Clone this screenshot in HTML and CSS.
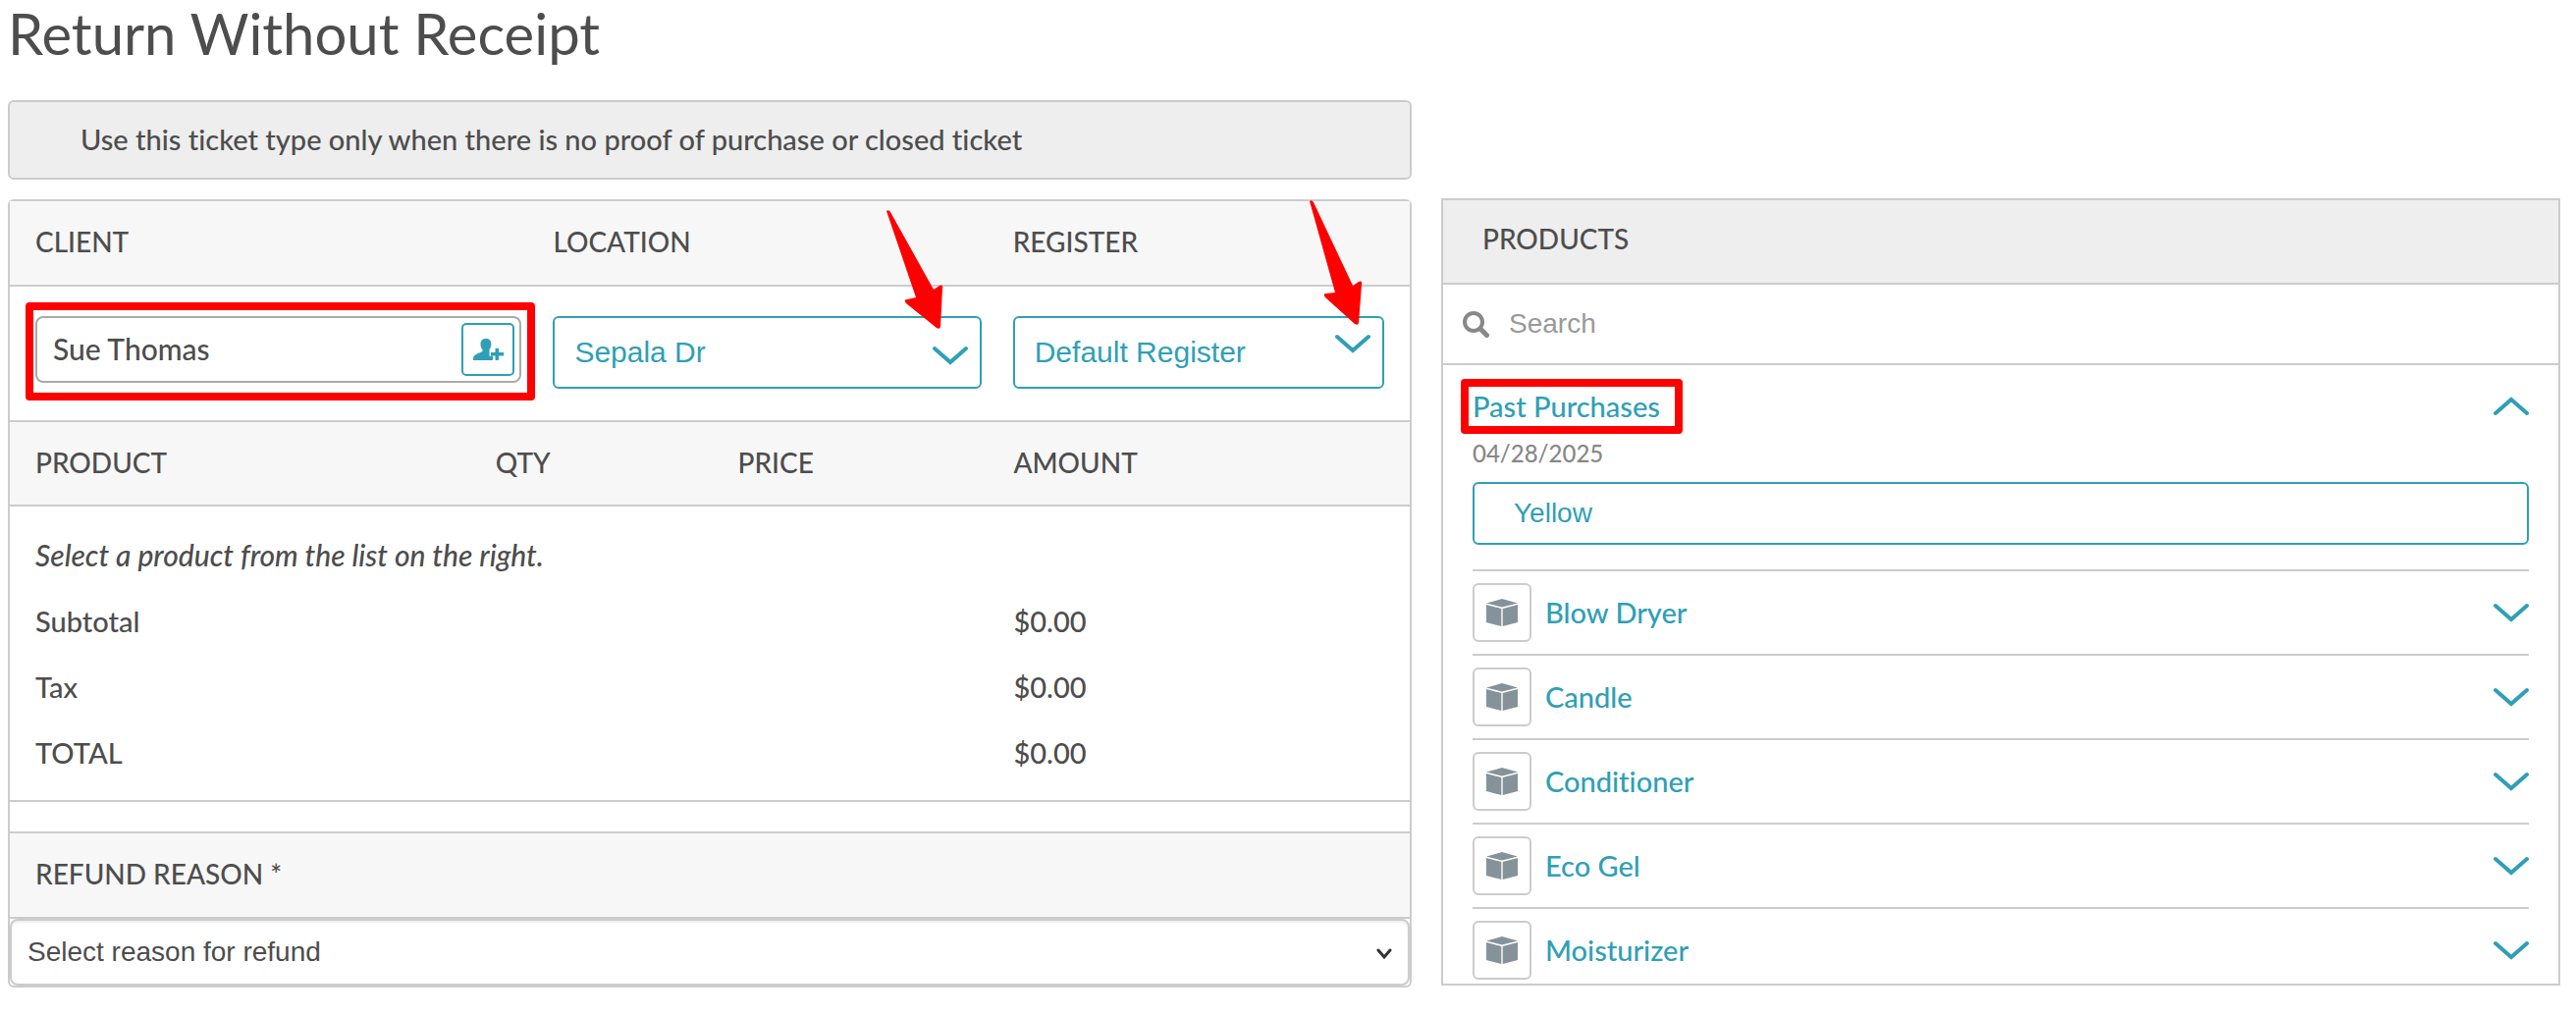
FILE: index.html
```html
<!DOCTYPE html>
<html lang="en">
<head>
    <meta charset="utf-8">
    <title>Return Without Receipt</title>
    <link rel="stylesheet" href="styles.css">
</head>
<body>
    <!-- shared icon shapes -->
    <svg class="sprite" aria-hidden="true">
        <symbol id="chevron" viewBox="0 0 36 20">
            <path d="M2 3 L18 17 L34 3" fill="none" stroke="currentColor" stroke-width="4" stroke-linecap="round"/>
        </symbol>
        <symbol id="box" viewBox="0 0 32 28">
            <path d="M16 0 L32 4.5 L16 8.5 L0 4.5 Z M0 6 L15.3 10 V28 L0 24 Z M32 6 L16.7 10 V28 L32 24 Z" fill="currentColor"/>
        </symbol>
    </svg>

    <h1 class="page-title">Return Without Receipt</h1>

    <main class="layout">
        <div class="ticket-column">
            <p class="notice">Use this ticket type only when there is no proof of purchase or closed ticket</p>

            <form class="panel ticket">
                <div class="fields head-row">
                    <label for="client">CLIENT</label>
                    <label for="location">LOCATION</label>
                    <label for="register">REGISTER</label>
                </div>
                <div class="fields field-row">
                    <div class="field client-field">
                        <input id="client" type="text" value="Sue Thomas">
                        <button type="button" class="add-client" aria-label="Add client">
                            <svg width="31" height="22" viewBox="0 0 31 22">
                                <path d="M13 0 C9.500 0 7.500 2 7.500 5.500 C7.500 8 8.300 9.800 9.500 11 V13 C7 14.500 0 16 0 20 V22 H20 V17.800 H16.500 V11 C17.700 9.500 18.300 8 18.300 5.500 C18.300 2 16.500 0 13 0 Z M22.500 9.700 H26 V14 H31 V17.500 H26 V22 H22.500 V17.500 H18 V14 H22.500 Z" fill="currentColor"/>
                            </svg>
                        </button>
                        <span class="mark mark-client"></span>
                    </div>
                    <div class="field">
                        <select id="location" class="pick">
                            <option>Sepala Dr</option>
                        </select>
                        <svg class="chevron pick-chevron"><use href="#chevron"/></svg>
                        <svg class="arrow" width="60" height="130" viewBox="0 0 60 130">
                            <path d="M4 11 Q6 9 8 12 L52 91 L58 87 Q62 85 61 90 L59 129 Q58 132 55 130 L24 105 Q21 101 25 101 L34 99 Z" fill="#f00"/>
                        </svg>
                    </div>
                    <div class="field">
                        <select id="register" class="pick">
                            <option>Default Register</option>
                        </select>
                        <svg class="chevron pick-chevron high"><use href="#chevron"/></svg>
                        <svg class="arrow arrow-register" width="60" height="130" viewBox="0 0 60 130">
                            <path d="M4 4 Q6 2 8 5 L48 90 L54 86 Q58 84 57 89 L54 128 Q53 131 50 129 L20 102 Q17 98 21 98 L30 97 Z" fill="#f00"/>
                        </svg>
                    </div>
                </div>

                <table class="items">
                    <thead>
                        <tr>
                            <th class="col-product">PRODUCT</th>
                            <th class="col-qty">QTY</th>
                            <th class="col-price">PRICE</th>
                            <th>AMOUNT</th>
                        </tr>
                    </thead>
                    <tbody>
                        <tr><td colspan="4"><em>Select a product from the list on the right.</em></td></tr>
                        <tr><td colspan="3">Subtotal</td><td>$0.00</td></tr>
                        <tr><td colspan="3">Tax</td><td>$0.00</td></tr>
                        <tr><td colspan="3">TOTAL</td><td>$0.00</td></tr>
                    </tbody>
                </table>

                <div class="head-row reason-head"><label for="reason">REFUND REASON *</label></div>
                <div class="field">
                    <select id="reason" class="reason">
                        <option>Select reason for refund</option>
                    </select>
                    <svg class="reason-chevron" width="16" height="12" viewBox="0 0 16 12">
                        <path d="M2 2 L8 9 L14 2" fill="none" stroke="#333" stroke-width="3" stroke-linecap="round"/>
                    </svg>
                </div>
            </form>
        </div>

        <section class="panel products">
            <h2 class="products-head">PRODUCTS</h2>
            <div class="search">
                <svg width="27" height="27" viewBox="0 0 27 27">
                    <circle cx="11" cy="11" r="9" fill="none" stroke="#888" stroke-width="4"/>
                    <path d="M18 18 L24.500 24.500" stroke="#888" stroke-width="5" stroke-linecap="round"/>
                </svg>
                <input type="search" placeholder="Search" aria-label="Search products">
            </div>
            <div class="list">
                <div class="past-head">
                    <a href="#">Past Purchases</a>
                    <svg class="chevron up"><use href="#chevron"/></svg>
                    <span class="mark mark-past"></span>
                </div>
                <p class="date">04/28/2025</p>
                <button type="button" class="past-item">Yellow</button>
                <ul class="product-list">
                    <li><span class="thumb"><svg><use href="#box"/></svg></span><a href="#">Blow Dryer</a><svg class="chevron"><use href="#chevron"/></svg></li>
                    <li><span class="thumb"><svg><use href="#box"/></svg></span><a href="#">Candle</a><svg class="chevron"><use href="#chevron"/></svg></li>
                    <li><span class="thumb"><svg><use href="#box"/></svg></span><a href="#">Conditioner</a><svg class="chevron"><use href="#chevron"/></svg></li>
                    <li><span class="thumb"><svg><use href="#box"/></svg></span><a href="#">Eco Gel</a><svg class="chevron"><use href="#chevron"/></svg></li>
                    <li><span class="thumb"><svg><use href="#box"/></svg></span><a href="#">Moisturizer</a><svg class="chevron"><use href="#chevron"/></svg></li>
                </ul>
            </div>
        </section>
    </main>
</body>
</html>
```
FILE: styles.css
```css
* { box-sizing: border-box; }
body { margin: 0; background: #fff; color: #4d4d4d; font: 500 29px/34px Lato, "Open Sans", sans-serif; font-variant-ligatures: none; }
h1, h2, p, ul { margin: 0; padding: 0; }
a { color: #2f9fb7; text-decoration: none; }
input, select, button { font: 28px/34px "Liberation Sans", Arial, sans-serif; color: #4d4d4d; background: #fff; }
.sprite { position: absolute; width: 0; height: 0; }

.page-title { padding: 0 8px 34px; font-size: 58px; line-height: 68px; font-weight: 400; }
.layout { display: grid; grid-template-columns: 1430fr 1140fr; gap: 30px; align-items: start; padding: 0 16px 0 8px; }

.notice { margin-bottom: 20px; padding: 21px 72px 22px; border: 2px solid #ccc; border-radius: 6px; background: #eee; }
.panel { border: 2px solid #ccc; }
.ticket { border-radius: 6px; }

/* client / location / register */
.fields { display: grid; grid-template-columns: 495fr 436fr 378fr; column-gap: 32px; }
.head-row { padding: 24px 26px 27px; background: #f7f7f7; border-bottom: 2px solid #ccc; font-size: 28px; }
.field-row { padding: 30px 26px 32px; align-items: start; }
.field { position: relative; }
.field input { display: block; width: 100%; height: 68px; padding: 0 72px 2px 16px; border: 2px solid #aaa; border-radius: 8px; font: 500 30px/34px Lato, "Open Sans", sans-serif; }
.add-client { position: absolute; top: 7px; right: 7px; display: flex; align-items: center; justify-content: center; width: 54px; height: 54px; padding: 0; border: 2px solid #2f9fb7; border-radius: 5px; color: #2f9fb7; }
.pick { appearance: none; display: block; width: 100%; height: 74px; padding: 0 60px 0 20px; border: 2px solid #2f9fb7; border-radius: 6px; color: #2f9fb7; font-size: 30px; }
.chevron { display: block; width: 36px; height: 20px; color: #2f9fb7; }
.pick-chevron { position: absolute; top: 30px; right: 14px; pointer-events: none; }
.pick-chevron.high { top: 18px; }

/* red callouts */
.mark { position: absolute; border: 8px solid #f00; border-radius: 4px; pointer-events: none; }
.mark-client { inset: -14px -14px -18px -10px; }
.mark-past { top: 14px; left: -12px; width: 226px; height: 56px; }
.arrow { position: absolute; top: -118px; right: 41px; overflow: visible; pointer-events: none; }
.arrow-register { top: -121px; right: 20px; }

.items { width: 100%; table-layout: fixed; border-collapse: collapse; border-bottom: 2px solid #ccc; }
.items th, .items td { padding: 16px 0 17px; text-align: left; font-weight: 500; }
.items th { padding: 24px 0 26px; background: #f7f7f7; border-top: 2px solid #ccc; border-bottom: 2px solid #ccc; font-size: 28px; }
.items th:first-child, .items td:first-child { padding-left: 26px; }
.items tbody tr:first-child td { padding-top: 32px; }
.items tbody tr:last-child td { padding-bottom: 31px; }
.items em { font-size: 30px; }
.col-product { width: 34.700%; }
.col-qty { width: 17.300%; }
.col-price { width: 19.700%; }

.reason-head { margin-top: 30px; border-top: 2px solid #ccc; }
.reason { appearance: none; display: block; width: 100%; height: 68px; padding: 0 48px 0 16px; border: 2px solid #ccc; border-radius: 8px; box-shadow: inset 0 2px 2px #eee; }
.reason-chevron { position: absolute; top: 30px; right: 18px; pointer-events: none; }

.products { margin-top: 100px; }
.products-head { padding: 22px 40px 28px; background: #eee; border-bottom: 2px solid #ccc; font-size: 28px; font-weight: 500; }
.search { display: flex; align-items: center; gap: 20px; height: 82px; padding: 0 20px; border-bottom: 2px solid #ccc; }
.search input { flex: 1; padding: 0; border: 0; outline: 0; }
.search input::placeholder { color: #999; }

.list { height: 630px; padding: 0 30px; overflow: hidden; }
.past-head { position: relative; display: flex; align-items: center; justify-content: space-between; height: 84px; }
.up { transform: rotate(180deg); }
.date { height: 35px; font-size: 24px; line-height: 12px; color: #888; }
.past-item { display: block; width: 100%; height: 64px; padding: 0 40px; border: 2px solid #2f9fb7; border-radius: 6px; color: #2f9fb7; text-align: left; }
.product-list { margin-top: 25px; list-style: none; }
.product-list li { display: flex; align-items: center; gap: 14px; height: 86px; border-top: 2px solid #ccc; }
.product-list .chevron { margin-left: auto; }
.thumb { display: flex; align-items: center; justify-content: center; width: 60px; height: 60px; border: 2px solid #ccc; border-radius: 6px; color: #85929a; }
.thumb svg { width: 32px; height: 28px; }
```
